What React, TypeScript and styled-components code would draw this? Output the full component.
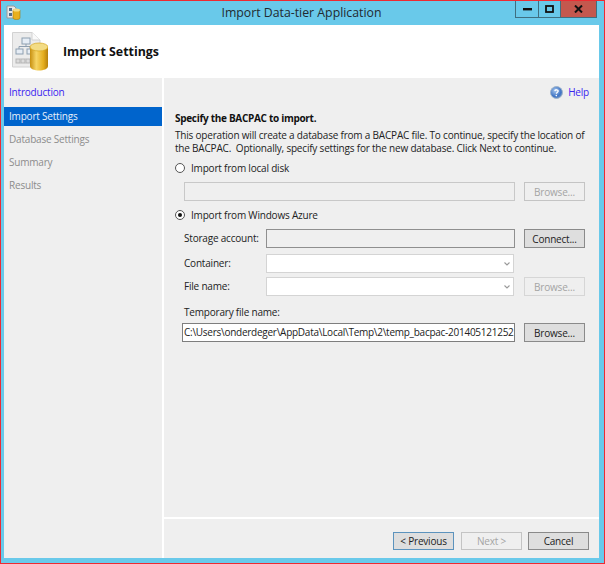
import styled, { createGlobalStyle } from "styled-components";

const GlobalStyle = createGlobalStyle`
  html, body {
    margin: 0;
    padding: 0;
    background: #ffffff;
  }
  * {
    box-sizing: border-box;
  }
`;

const Frame = styled.div`
  width: 605px;
  height: 564px;
  display: flex;
  flex-direction: column;
  background: #69c9ea;
  border: 1px solid #ee2a32;
  padding: 0 5px 5px 3px;
  font-family: "Open Sans", "Noto Sans", sans-serif;
  font-size: 10px;
  letter-spacing: -0.2px;
  color: #222222;
  overflow: hidden;
`;

const TitleBar = styled.div`
  height: 24px;
  flex: none;
  display: grid;
  grid-template-columns: 1fr auto 1fr;
  align-items: start;
`;

const TitleIcon = styled.svg`
  width: 15px;
  height: 15px;
  margin: 4px 0 0 2px;
`;

const Title = styled.div`
  font-size: 12.3px;
  letter-spacing: 0;
  line-height: 24px;
  color: #222a30;
`;

const WindowControls = styled.div`
  justify-self: end;
  display: flex;
  height: 17px;
  margin-right: 2px;
  border: 1px solid #3f6f80;
  border-top: none;
`;

const ControlButton = styled.div<{ $close?: boolean; $wide?: boolean }>`
  width: ${(p) => (p.$close ? "35px" : p.$wide ? "22px" : "23px")};
  display: flex;
  align-items: center;
  justify-content: center;
  background: ${(p) => (p.$close ? "#c4584e" : "transparent")};
  border-right: ${(p) => (p.$close ? "none" : "1px solid #3f6f80")};
`;

const Header = styled.div`
  height: 53px;
  flex: none;
  display: flex;
  align-items: center;
  background: #ffffff;
  padding-left: 8px;
`;

const HeaderIcon = styled.div`
  width: 36px;
  height: 39px;
  flex: none;
`;

const HeaderTitle = styled.div`
  margin-left: 15px;
  font-weight: 700;
  font-size: 12.4px;
  letter-spacing: 0;
  color: #111111;
`;

const Body = styled.div`
  flex: 1;
  min-height: 0;
  display: flex;
  background: #ffffff;
`;

const Sidebar = styled.div`
  width: 158px;
  flex: none;
  background: #efefef;
  padding-top: 5px;
  margin-right: 2px;
`;

const NavItem = styled.div<{ $state: "link" | "active" | "idle" }>`
  height: 19px;
  margin-bottom: 4px;
  padding-left: 5px;
  line-height: 18px;
  background: ${(p) => (p.$state === "active" ? "#0064cc" : "transparent")};
  color: ${(p) =>
    p.$state === "active" ? "#e8f0fa" : p.$state === "link" ? "#3a24f0" : "#8c8c8c"};
  &:first-child {
    margin-bottom: 5px;
  }
`;

const Main = styled.div`
  flex: 1;
  min-width: 0;
  display: flex;
  flex-direction: column;
`;

const Content = styled.div`
  height: 439px;
  flex: none;
  background: #efefef;
  padding: 0 14px 0 11px;
`;

const HelpRow = styled.div`
  height: 28px;
  display: flex;
  align-items: center;
  justify-content: flex-end;
  gap: 5px;
  margin-right: -4px;
  color: #3a24f0;
`;

const Heading = styled.div`
  margin-top: 6px;
  font-weight: 700;
  letter-spacing: -0.3px;
  line-height: 13px;
  color: #111111;
`;

const Paragraph = styled.div`
  margin-top: 4px;
  line-height: 13px;
  white-space: pre;
`;

const RadioRow = styled.div<{ $top: number }>`
  display: flex;
  align-items: center;
  gap: 6px;
  height: 14px;
  margin-top: ${(p) => p.$top}px;
`;

const Radio = styled.span<{ $on?: boolean }>`
  width: 10px;
  height: 10px;
  border-radius: 50%;
  border: 1px solid #555555;
  background: #ffffff;
  display: flex;
  align-items: center;
  justify-content: center;
  &::after {
    content: "";
    display: ${(p) => (p.$on ? "block" : "none")};
    width: 4px;
    height: 4px;
    border-radius: 50%;
    background: #111111;
  }
`;

const FieldRow = styled.div<{ $top: number }>`
  display: grid;
  grid-template-columns: 1fr 61px;
  column-gap: 9px;
  align-items: center;
  margin-top: ${(p) => p.$top}px;
  margin-left: 9px;
`;

const LabeledField = styled.div`
  display: grid;
  grid-template-columns: 82px 1fr;
  align-items: center;
`;

const FieldLabel = styled.span`
  padding-bottom: 2px;
`;

const TextField = styled.div<{ $tone: "disabled" | "readonly" | "normal"; $height: number }>`
  height: ${(p) => p.$height}px;
  border: 1px solid ${(p) => (p.$tone === "readonly" ? "#8f8f8f" : p.$tone === "disabled" ? "#c8c8c8" : "#7e7e7e")};
  background: ${(p) => (p.$tone === "normal" ? "#ffffff" : "#efefef")};
  padding-left: 1px;
  line-height: 17px;
  letter-spacing: -0.26px;
  white-space: nowrap;
  overflow: hidden;
`;

const Combo = styled.div<{ $height: number }>`
  height: ${(p) => p.$height}px;
  margin-right: 1px;
  border: 1px solid #d4d4d4;
  background: #ffffff;
  display: flex;
  align-items: center;
  justify-content: flex-end;
  padding-right: 3px;
`;

const Button = styled.div<{ $state?: "disabled" | "faint" | "focus" }>`
  height: 19px;
  display: flex;
  align-items: center;
  justify-content: center;
  background: ${(p) => (p.$state === "disabled" || p.$state === "faint" ? "#efefef" : "#dedede")};
  border: 1px solid
    ${(p) =>
      p.$state === "disabled"
        ? "#c4c4c4"
        : p.$state === "faint"
          ? "#d6d6d6"
          : p.$state === "focus"
            ? "#5c93bd"
            : "#8a8a8a"};
  color: ${(p) => (p.$state === "disabled" || p.$state === "faint" ? "#a4a4a4" : "#222222")};
`;

const TempLabel = styled.div`
  margin: 10px 0 4px 9px;
  line-height: 13px;
`;

const TempRow = styled(FieldRow)`
  margin-left: 7px;
`;

const Footer = styled.div`
  flex: 1;
  display: flex;
  justify-content: flex-end;
  gap: 6px;
  background: #efefef;
  margin-top: 2px;
  padding: 13px 10px 0 0;
`;

const FooterButton = styled(Button)`
  width: 61px;
  height: 18px;
  &:first-child {
    margin-right: 1px;
  }
`;

const Chevron = () => (
  <svg width="6" height="4" viewBox="0 0 6 4">
    <path d="M0.5 0.5 L3 3 L5.5 0.5" fill="none" stroke="#9a9a9a" strokeWidth="1.1" />
  </svg>
);

const HelpIcon = () => (
  <svg width="13" height="13" viewBox="0 0 13 13">
    <defs>
      <radialGradient id="helpFill" cx="0.4" cy="0.35" r="0.8">
        <stop offset="0" stopColor="#a9c8ee" />
        <stop offset="0.6" stopColor="#3f74c4" />
        <stop offset="1" stopColor="#8aa6c8" />
      </radialGradient>
    </defs>
    <circle cx="6.5" cy="6.5" r="6" fill="url(#helpFill)" stroke="#9fb3c9" />
    <path
      d="M4.8 4.8 C5 3.4 8.2 3.4 8.2 5 C8.2 6.2 6.5 6.2 6.4 7.7"
      fill="none"
      stroke="#ffffff"
      strokeWidth="1.3"
    />
    <circle cx="6.3" cy="9.6" r="0.8" fill="#ffffff" />
  </svg>
);

const DocDbIcon = () => (
  <svg viewBox="0 0 36 39" width="36" height="39">
    <defs>
      <linearGradient id="dbBody" x1="0" x2="1" y1="0" y2="0">
        <stop offset="0" stopColor="#c78f10" />
        <stop offset="0.35" stopColor="#f6d566" />
        <stop offset="0.75" stopColor="#e4ad1d" />
        <stop offset="1" stopColor="#b57f0c" />
      </linearGradient>
    </defs>
    <path d="M0.5 0.5 H20 L28 8 V35 H0.5 Z" fill="#ececec" stroke="#d2d2d2" />
    <path d="M20 0.5 V8 H28" fill="#fafafa" stroke="#d2d2d2" />
    <rect x="10" y="6" width="8" height="6" fill="#e6edf5" stroke="#8e9fb0" />
    <rect x="4" y="17" width="7" height="5" fill="#e6edf5" stroke="#8e9fb0" />
    <rect x="15" y="17" width="5" height="5" fill="#e6edf5" stroke="#8e9fb0" />
    <path d="M14 12 V14.5 M7 17 V14.5 H18 V17" fill="none" stroke="#8e9fb0" />
    <rect x="4" y="27" width="4" height="4" fill="#dcdcdc" stroke="#b5b5b5" />
    <rect x="9" y="27" width="4" height="4" fill="#dcdcdc" stroke="#b5b5b5" />
    <rect x="14" y="27" width="4" height="4" fill="#dcdcdc" stroke="#b5b5b5" />
    <path d="M18 15 V34 C18 40 36 40 36 34 V15 Z" fill="url(#dbBody)" />
    <ellipse cx="27" cy="15" rx="9" ry="4" fill="#f3dc85" stroke="#d6a51e" strokeWidth="0.7" />
  </svg>
);

const SmallAppIcon = () => (
  <TitleIcon viewBox="0 0 15 15">
    <path d="M1 1 H8 L10 3 V13 H1 Z" fill="#e8e8e8" stroke="#9a9a9a" />
    <rect x="3" y="3" width="3" height="3" fill="#4f6c8c" />
    <rect x="3" y="8" width="3" height="3" fill="#4f6c8c" />
    <path d="M7 5 V13 C7 15 14 15 14 13 V5 Z" fill="#e8b01f" stroke="#a87a0c" strokeWidth="0.6" />
    <ellipse cx="10.5" cy="5" rx="3.5" ry="1.6" fill="#f6dc84" />
  </TitleIcon>
);

export default function App() {
  return (
    <>
      <GlobalStyle />
      <Frame>
        <TitleBar>
          <SmallAppIcon />
          <Title>Import Data-tier Application</Title>
          <WindowControls>
            <ControlButton>
              <svg width="9" height="3" viewBox="0 0 9 3">
                <rect width="9" height="2.4" fill="#111111" />
              </svg>
            </ControlButton>
            <ControlButton $wide>
              <svg width="9" height="8" viewBox="0 0 9 8">
                <rect x="1" y="1" width="7" height="6" fill="none" stroke="#111111" strokeWidth="1.8" />
              </svg>
            </ControlButton>
            <ControlButton $close>
              <svg width="9" height="8" viewBox="0 0 9 8">
                <path d="M1 0.5 L8 7.5 M8 0.5 L1 7.5" stroke="#111111" strokeWidth="2" />
              </svg>
            </ControlButton>
          </WindowControls>
        </TitleBar>
        <Header>
          <HeaderIcon>
            <DocDbIcon />
          </HeaderIcon>
          <HeaderTitle>Import Settings</HeaderTitle>
        </Header>
        <Body>
          <Sidebar>
            <NavItem $state="link">Introduction</NavItem>
            <NavItem $state="active">Import Settings</NavItem>
            <NavItem $state="idle">Database Settings</NavItem>
            <NavItem $state="idle">Summary</NavItem>
            <NavItem $state="idle">Results</NavItem>
          </Sidebar>
          <Main>
            <Content>
              <HelpRow>
                <HelpIcon />
                Help
              </HelpRow>
              <Heading>Specify the BACPAC to import.</Heading>
              <Paragraph>
                {"This operation will create a database from a BACPAC file. To continue, specify the location of\nthe BACPAC.  Optionally, specify settings for the new database. Click Next to continue."}
              </Paragraph>
              <RadioRow $top={6}>
                <Radio />
                Import from local disk
              </RadioRow>
              <FieldRow $top={7}>
                <TextField $tone="disabled" $height={19} />
                <Button $state="disabled">Browse...</Button>
              </FieldRow>
              <RadioRow $top={7}>
                <Radio $on />
                Import from Windows Azure
              </RadioRow>
              <FieldRow $top={7}>
                <LabeledField>
                  <FieldLabel>Storage account:</FieldLabel>
                  <TextField $tone="readonly" $height={19} />
                </LabeledField>
                <Button>Connect...</Button>
              </FieldRow>
              <FieldRow $top={6}>
                <LabeledField>
                  <FieldLabel>Container:</FieldLabel>
                  <Combo $height={19}>
                    <Chevron />
                  </Combo>
                </LabeledField>
              </FieldRow>
              <FieldRow $top={4}>
                <LabeledField>
                  <FieldLabel>File name:</FieldLabel>
                  <Combo $height={19}>
                    <Chevron />
                  </Combo>
                </LabeledField>
                <Button $state="faint">Browse...</Button>
              </FieldRow>
              <TempLabel>Temporary file name:</TempLabel>
              <TempRow $top={0}>
                <TextField $tone="normal" $height={19}>
                  {"C:\\Users\\onderdeger\\AppData\\Local\\Temp\\2\\temp_bacpac-201405121252"}
                </TextField>
                <Button>Browse...</Button>
              </TempRow>
            </Content>
            <Footer>
              <FooterButton $state="focus">&lt; Previous</FooterButton>
              <FooterButton $state="disabled">Next &gt;</FooterButton>
              <FooterButton>Cancel</FooterButton>
            </Footer>
          </Main>
        </Body>
      </Frame>
    </>
  );
}
